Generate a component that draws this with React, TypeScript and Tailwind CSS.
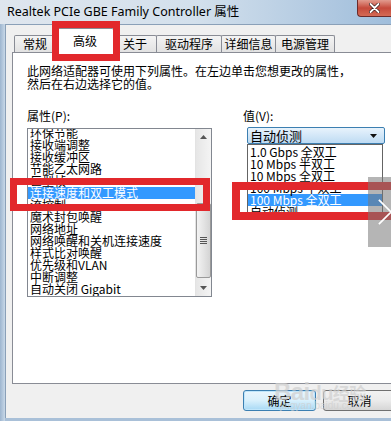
import React from "react";

const cjk = { fontFamily: '"Noto Sans CJK SC", "Noto Sans", sans-serif' };

const props = [
  "环保节能",
  "接收端调整",
  "接收缓冲区",
  "节能乙太网路",
  "巨型帧",
  "连接速度和双工模式",
  "流控制",
  "魔术封包唤醒",
  "网络地址",
  "网络唤醒和关机连接速度",
  "样式比对唤醒",
  "优先级和VLAN",
  "中断调整",
  "自动关闭 Gigabit",
];

const values = [
  "1.0 Gbps 全双工",
  "10 Mbps 半双工",
  "10 Mbps 全双工",
  "100 Mbps 半双工",
  "100 Mbps 全双工",
  "自动侦测",
];

function Tab({ label, w, selected }: { label: string; w: string; selected?: boolean }) {
  if (selected) {
    return (
      <div
        className={`${w} h-[25px] -mb-px relative z-10 bg-white border border-b-0 border-[#898c95] rounded-t-[2px] flex items-center justify-center text-[12px] text-black`}
      >
        {label}
      </div>
    );
  }
  return (
    <div
      className={`${w} h-[17px] bg-gradient-to-b from-[#f4f4f4] to-[#e2e2e2] border border-b-0 border-[#898c95] -ml-px first:ml-0 rounded-t-[2px] flex items-center justify-center text-[12px] text-black leading-none`}
    >
      {label}
    </div>
  );
}

export default function App() {
  return (
    <div className="w-[391px] h-[421px] overflow-hidden relative bg-[#a9c0d8] flex flex-col" style={cjk}>
      {/* Title bar */}
      <div className="h-[24px] shrink-0 relative bg-gradient-to-r from-[#dfe6ee] via-[#d3e0ec] to-[#9fbddb] flex items-center pl-[7px]">
        <span className="text-[12.5px] text-black leading-none" style={{ fontFamily: '"Noto Sans", "Noto Sans CJK SC", sans-serif' }}>
          Realtek PCIe GBE Family Controller 属性
        </span>
        <div className="absolute right-0 top-0 w-[34px] h-[17px] rounded-bl-[4px] border border-[#6b2a2a] border-t-0 border-r-0 bg-gradient-to-b from-[#e19b8f] via-[#c5493b] to-[#d46a55] flex items-center justify-center">
          <svg width="11" height="10" viewBox="0 0 11 10">
            <path d="M1.5 1 L9.5 9 M9.5 1 L1.5 9" stroke="#3a1a1a" strokeWidth="3.2" strokeLinecap="round" />
            <path d="M1.5 1 L9.5 9 M9.5 1 L1.5 9" stroke="#ffffff" strokeWidth="1.8" strokeLinecap="round" />
          </svg>
        </div>
      </div>

      {/* Body */}
      <div className="flex-1 flex">
        <div className="w-[5px] shrink-0 bg-gradient-to-r from-[#9db5cf] to-[#c8d8e8]" />
        <div className="flex-1 flex flex-col bg-[#f0f0f0] border-t border-l border-[#8aa0b8] mb-[3px]">
          {/* Tabs */}
          <div className="h-[27px] shrink-0 flex items-end pl-[8px]">
            <Tab label="常规" w="w-[42px]" />
            <Tab label="高级" w="w-[58px]" selected />
            <Tab label="关于" w="w-[44px]" />
            <Tab label="驱动程序" w="w-[66px]" />
            <Tab label="详细信息" w="w-[55px]" />
            <Tab label="电源管理" w="w-[60px]" />
          </div>

          {/* Panel */}
          <div className="ml-[6px] w-[400px] h-[332px] shrink-0 bg-white border border-[#898c95] text-[12px] text-black">
            <div className="pl-[14px] pt-[11px] leading-[13px]">
              <div>此网络适配器可使用下列属性。在左边单击您想更改的属性，</div>
              <div>然后在右边选择它的值。</div>
            </div>
            <div className="flex pl-[14px] mt-[19px]">
              {/* Left column */}
              <div className="w-[185px] shrink-0">
                <div className="leading-[13px]">属性(P):</div>
                <div className="mt-[6px] h-[169px] border border-[#828790] bg-white flex overflow-hidden">
                  <div className="flex-1 overflow-hidden">
                    <div className="-mt-[2px]">
                      {props.map((p, i) => (
                        <div
                          key={p}
                          className={`h-[12px] leading-[12px] pl-[2px] whitespace-nowrap ${i === 5 ? "bg-[#3399ff] text-white" : ""}`}
                        >
                          {p}
                        </div>
                      ))}
                    </div>
                  </div>
                  {/* Scrollbar */}
                  <div className="w-[16px] shrink-0 bg-gradient-to-r from-[#e6e6e6] to-[#f4f4f4] border-l border-[#e3e3e3] flex flex-col">
                    <div className="h-[16px] flex items-center justify-center">
                      <svg width="7" height="4" viewBox="0 0 7 4"><path d="M0 4 L3.5 0 L7 4 Z" fill="#555" /></svg>
                    </div>
                    <div className="flex-1 relative">
                      <div className="absolute left-0 right-0 top-[58px] h-[75px] rounded-[2px] border border-[#9a9a9a] bg-gradient-to-r from-[#f3f3f3] via-[#e4e4e4] to-[#d4d4d4] flex items-center justify-center">
                        <div className="flex flex-col gap-[1px]">
                          <div className="w-[7px] h-px bg-[#555]" />
                          <div className="w-[7px] h-px bg-[#555]" />
                          <div className="w-[7px] h-px bg-[#555]" />
                          <div className="w-[7px] h-px bg-[#555]" />
                        </div>
                      </div>
                    </div>
                    <div className="h-[16px] flex items-center justify-center">
                      <svg width="7" height="4" viewBox="0 0 7 4"><path d="M0 0 L3.5 4 L7 0 Z" fill="#555" /></svg>
                    </div>
                  </div>
                </div>
              </div>

              {/* Right column */}
              <div className="ml-[31px] flex flex-col">
                <div className="leading-[13px]">值(V):</div>
                <div className="ml-[4px] mt-[5px] w-[138px] h-[17px] relative">
                  <div className="h-full rounded-[2px] border border-[#3c7fb1] bg-gradient-to-b from-[#e8f3fc] to-[#bedbf3] flex items-center pl-[2px] pr-[7px]">
                    <span className="flex-1 leading-[13px] text-[13px]">自动侦测</span>
                    <svg width="7" height="4" viewBox="0 0 7 4"><path d="M0 0 L3.5 4 L7 0 Z" fill="#111" /></svg>
                  </div>
                  {/* Dropdown list */}
                  <div className="absolute left-0 top-[17px] w-[136px] h-[76px] bg-white border border-[#646464] pt-[1px] z-20">
                    {values.map((v, i) => (
                      <div
                        key={v}
                        className={`h-[12px] leading-[12px] pl-[2px] whitespace-nowrap ${i === 4 ? "bg-[#3399ff] text-white" : ""}`}
                      >
                        {v}
                      </div>
                    ))}
                  </div>
                </div>
              </div>
            </div>
          </div>

          {/* Buttons */}
          <div className="flex ml-[237px] mt-[6px] gap-[7px] text-[12px]">
            <div className="w-[73px] h-[21px] shrink-0 rounded-[3px] border border-[#3c7fb1] bg-gradient-to-b from-[#eaf6fd] via-[#d9f0fc] to-[#a7d9f5] flex items-center justify-center shadow-[inset_0_0_0_1px_#c0e6fb]">
              确定
            </div>
            <div className="w-[73px] h-[21px] shrink-0 rounded-[3px] border border-[#707070] bg-gradient-to-b from-[#f2f2f2] via-[#ebebeb] to-[#d6d6d6] flex items-center justify-center">
              取消
            </div>
          </div>
        </div>
      </div>

      {/* Red annotation boxes */}
      <div className="absolute left-[52px] top-[21px] w-[68px] h-[40px] border-[7px] border-[#e2282c] pointer-events-none z-30" />
      <div className="absolute left-[10px] top-[178px] w-[200px] h-[33px] border-[7px] border-[#e2282c] pointer-events-none z-30" />
      <div className="absolute left-[232px] top-[182px] w-[170px] h-[38px] border-[8px] border-[#e2282c] pointer-events-none z-30" />

      {/* Viewer next arrow overlay */}
      <div className="absolute left-[368px] top-[177px] w-[30px] h-[70px] bg-[rgba(120,120,120,0.55)] z-40 flex items-center">
        <svg width="23" height="34" viewBox="0 0 23 34" className="ml-[10px]">
          <path d="M1 3 L15 17 L1 31" stroke="#ffffff" strokeWidth="2" fill="none" />
        </svg>
      </div>

      {/* Watermark */}
      <div className="absolute left-[274px] top-[380px] z-40 pointer-events-none text-[#cfcfcf] leading-none opacity-70">
        <div className="text-[24px] font-bold tracking-tight" style={{ fontFamily: '"Liberation Sans", "Noto Sans CJK SC", sans-serif' }}>
          Bai<span className="text-[20px]">du</span><span className="text-[17px]">经验</span>
        </div>
        <div className="text-[10px] mt-[-3px] ml-[6px]" style={{ fontFamily: '"Liberation Sans", sans-serif' }}>jingyan.baidu.com</div>
      </div>
    </div>
  );
}
